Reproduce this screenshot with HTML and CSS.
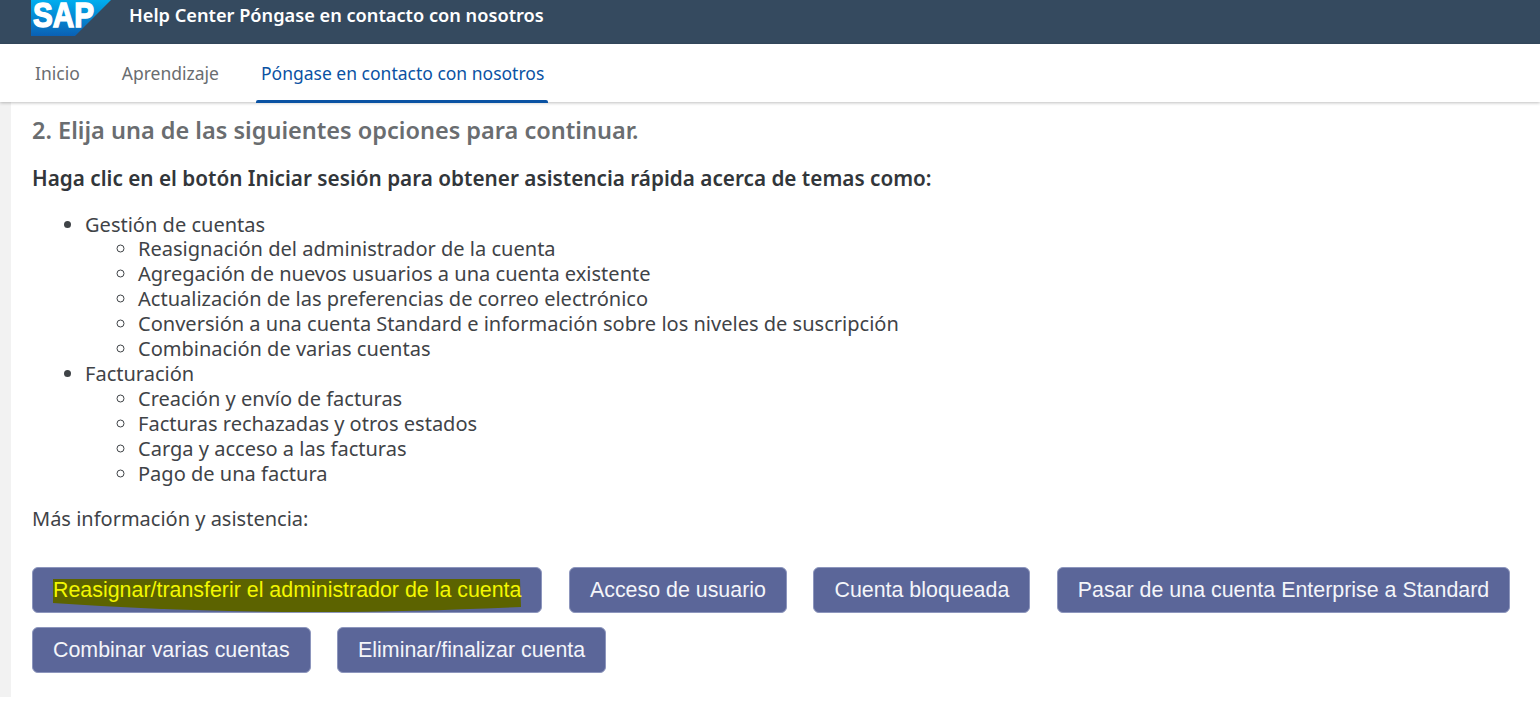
FILE: index.html
```html
<!DOCTYPE html>
<html lang="es">
<head>
<meta charset="utf-8">
<title>Help Center</title>
<link rel="stylesheet" href="styles.css">
</head>
<body>
<header class="shell">
  <svg class="logo" width="80" height="37" viewBox="0 0 80 37" aria-label="SAP">
    <defs>
      <linearGradient id="sapg" x1="0" y1="0" x2="0" y2="1">
        <stop offset="0" stop-color="#00aeef"/>
        <stop offset="1" stop-color="#0a60b4"/>
      </linearGradient>
    </defs>
    <polygon points="0,0 80,0 44,36 0,36" fill="url(#sapg)"/>
    <text class="logo-text" x="2" y="27" textLength="61" lengthAdjust="spacingAndGlyphs">SAP</text>
  </svg>
  <span class="shell-title">Help Center Póngase en contacto con nosotros</span>
</header>
<nav class="tabs">
  <a class="tab">Inicio</a>
  <a class="tab">Aprendizaje</a>
  <a class="tab tab-active">Póngase en contacto con nosotros</a>
</nav>
<main class="page">
  <h2 class="step">2. Elija una de las siguientes opciones para continuar.</h2>
  <p class="lead">Haga clic en el botón Iniciar sesión para obtener asistencia rápida acerca de temas como:</p>
  <ul class="topics">
    <li>Gestión de cuentas
      <ul>
        <li>Reasignación del administrador de la cuenta</li>
        <li>Agregación de nuevos usuarios a una cuenta existente</li>
        <li>Actualización de las preferencias de correo electrónico</li>
        <li>Conversión a una cuenta Standard e información sobre los niveles de suscripción</li>
        <li>Combinación de varias cuentas</li>
      </ul>
    </li>
    <li>Facturación
      <ul>
        <li>Creación y envío de facturas</li>
        <li>Facturas rechazadas y otros estados</li>
        <li>Carga y acceso a las facturas</li>
        <li>Pago de una factura</li>
      </ul>
    </li>
  </ul>
  <p class="more">Más información y asistencia:</p>
  <div class="actions">
    <a class="btn btn-marked">
      <svg class="marker" width="468" height="33" viewBox="0 0 468 33" aria-hidden="true"><path d="M0 0H467L468 28C400 31 330 33 270 33H230C150 32 70 29 0 24Z" fill="#5c6300"/></svg>
      <span class="btn-label">Reasignar/transferir el administrador de la cuenta</span>
    </a>
    <a class="btn">Acceso de usuario</a>
    <a class="btn">Cuenta bloqueada</a>
    <a class="btn">Pasar de una cuenta Enterprise a Standard</a>
    <a class="btn">Combinar varias cuentas</a>
    <a class="btn">Eliminar/finalizar cuenta</a>
  </div>
</main>
</body>
</html>
```
FILE: styles.css
```css
* { box-sizing: border-box; }
html, body { margin: 0; height: 702px; overflow: hidden; background: #fff; }
body { font-family: "Noto Sans", "Open Sans", sans-serif; color: #3f4347; }

.shell {
  height: 44px;
  background: #354a5f;
  display: flex;
  align-items: flex-start;
  padding-left: 31px;
}
.logo { flex: none; display: block; }
.logo-text {
  font-family: "Liberation Sans", sans-serif;
  font-weight: 700;
  font-size: 35px;
  fill: #fff;
  stroke: #fff;
  stroke-width: 1.5px;
}
.shell-title {
  margin: 3px 0 0 18px;
  font-size: 18.2px;
  line-height: 24px;
  font-weight: 600;
  color: #fff;
}

.tabs {
  position: relative;
  height: 58px;
  display: flex;
  padding-left: 35px;
  gap: 42px;
  background: #fff;
  box-shadow: 0 1px 3px rgba(0, 0, 0, .25);
  z-index: 1;
}
.tab {
  position: relative;
  font-size: 17.5px;
  line-height: 58px;
  color: #6a6d70;
}
.tab-active { color: #0a52a3; }
.tab-active::after {
  content: "";
  position: absolute;
  left: -5px;
  right: -4px;
  bottom: -1px;
  height: 3px;
  background: #0a52a3;
  border-radius: 2px 2px 0 0;
}

.page {
  height: 595px;
  padding: 0 20px 0 21px;
  border-left: 11px solid #f2f2f2;
}
.step {
  margin: 0;
  padding-top: 13px;
  font-size: 23.5px;
  line-height: 30px;
  font-weight: 600;
  color: #6a6d70;
}
.lead {
  margin: 19px 0 0;
  font-size: 20.72px;
  line-height: 28px;
  font-weight: 600;
  color: #32363a;
}
.topics {
  margin: 20.5px 0 0;
  padding: 0 0 0 53px;
  font-size: 20.05px;
  line-height: 24.9px;
  list-style: disc;
}
.topics ul {
  margin: 0;
  padding: 0 0 0 53px;
  list-style: circle;
}
.more {
  margin: 18.5px 0 0;
  font-size: 20px;
  line-height: 27px;
}
.actions {
  margin-top: 35px;
  display: flex;
  flex-wrap: wrap;
  gap: 14px 26.5px;
  width: 1480px;
}
.btn {
  position: relative;
  height: 46px;
  padding: 2px 20px 0;
  display: flex;
  align-items: center;
  background: #5b6699;
  border: 1px solid #8d96bd;
  border-radius: 6px;
  font-family: "Liberation Sans", Arial, sans-serif;
  font-size: 21.4px;
  color: #f4f5f9;
  white-space: nowrap;
}
.btn-marked { color: #f3f700; }
.marker { position: absolute; left: 20px; top: 11px; }
.btn-label { position: relative; }
```
